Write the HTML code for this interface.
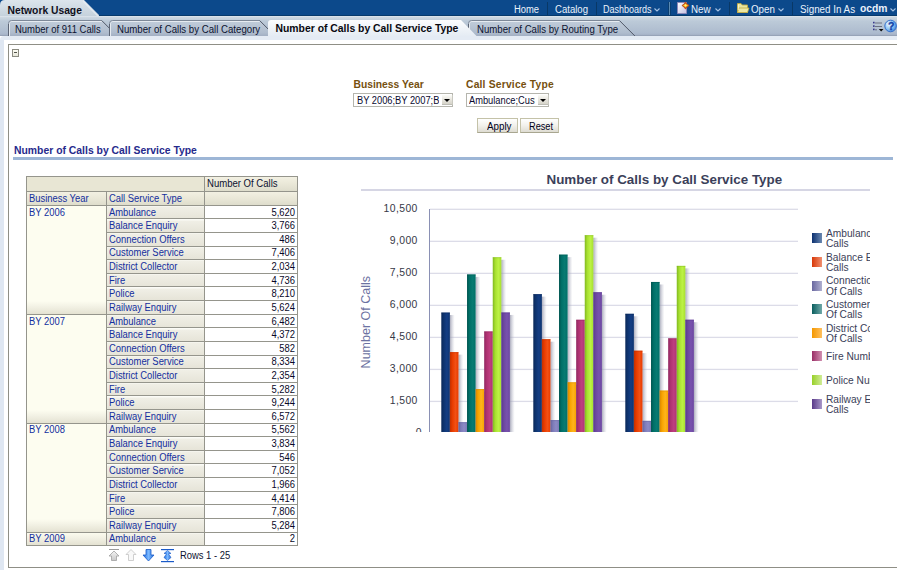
<!DOCTYPE html><html><head><meta charset="utf-8"><style>
*{margin:0;padding:0;box-sizing:border-box}
html,body{width:897px;height:570px;overflow:hidden;background:#fff;font-family:"Liberation Sans", sans-serif;position:relative}
.a{position:absolute;white-space:nowrap;line-height:1}
.s{-webkit-text-stroke:0px currentColor}
</style></head><body><div class="a" style="left:0;top:0;width:897px;height:16px;background:#0c498b"></div><svg class="a" style="left:0;top:0" width="120" height="20"><defs><linearGradient id="nug" x1="0" y1="0" x2="0" y2="1"><stop offset="0" stop-color="#dce5ec"/><stop offset="1" stop-color="#c0cdd8"/></linearGradient></defs><path d="M0,20 L0,5 Q0,0 5,0 L84,0 L100,16 L120,16 L120,20 Z" fill="url(#nug)"/><path d="M83,1 L98,16" stroke="#e8eef3" stroke-width="1.5" opacity="0.8"/></svg><div class="a s" style="left:514.00px;top:4.94px;font-size:10.0px;color:#eaf2fb;transform-origin:0 0;transform:scaleX(0.94);">Home</div><div class="a s" style="left:554.50px;top:4.94px;font-size:10.0px;color:#eaf2fb;transform-origin:0 0;transform:scaleX(0.957);">Catalog</div><div class="a s" style="left:603.00px;top:4.94px;font-size:10.0px;color:#eaf2fb;transform-origin:0 0;transform:scaleX(0.9);">Dashboards</div><div class="a s" style="left:691.00px;top:4.94px;font-size:10.0px;color:#eaf2fb;transform-origin:0 0;transform:scaleX(0.98);">New</div><div class="a s" style="left:750.50px;top:4.94px;font-size:10.0px;color:#eaf2fb;transform-origin:0 0;transform:scaleX(0.98);">Open</div><div class="a s" style="left:799.50px;top:4.94px;font-size:10.0px;color:#eaf2fb;transform-origin:0 0;transform:scaleX(0.98);">Signed In As</div><div class="a" style="left:860.00px;top:4.48px;font-size:10.3px;color:#eaf2fb;font-weight:700;">ocdm</div><div class="a" style="left:547px;top:2px;width:1px;height:13px;background:#093866"></div><div class="a" style="left:596px;top:2px;width:1px;height:13px;background:#093866"></div><div class="a" style="left:729px;top:2px;width:1px;height:13px;background:#093866"></div><div class="a" style="left:792px;top:2px;width:1px;height:13px;background:#093866"></div><div class="a" style="left:668px;top:2px;width:1px;height:13px;background:#0a3e70"></div><div class="a" style="left:669px;top:2px;width:1px;height:13px;background:#5a8ab2"></div><div class="a" style="left:670px;top:2px;width:1px;height:13px;background:#0a3e70"></div><div class="a" style="left:99px;top:15px;width:798px;height:1px;background:#073a6c"></div><svg class="a" style="left:654px;top:8px" width="7" height="4"><path d="M0.5,0.5 L3,3 L5.5,0.5" stroke="#a6c2e4" stroke-width="1.1" fill="none"/></svg><svg class="a" style="left:715px;top:8px" width="7" height="4"><path d="M0.5,0.5 L3,3 L5.5,0.5" stroke="#a6c2e4" stroke-width="1.1" fill="none"/></svg><svg class="a" style="left:777.5px;top:8px" width="7" height="4"><path d="M0.5,0.5 L3,3 L5.5,0.5" stroke="#a6c2e4" stroke-width="1.1" fill="none"/></svg><svg class="a" style="left:889.5px;top:8px" width="7" height="4"><path d="M0.5,0.5 L3,3 L5.5,0.5" stroke="#a6c2e4" stroke-width="1.1" fill="none"/></svg><div class="a" style="left:0;top:16px;width:897px;height:20px;background:linear-gradient(#e0e7ee 0px,#ccd7e1 1.5px,#bccad8 5px,#adbbce 17px,#a4b1c5 19px,#8a96aa 20px)"></div><div class="a" style="left:0;top:36px;width:897px;height:4px;background:#e4ebf4;border-radius:4px 0 0 0"></div><div class="a" style="left:0;top:40px;width:4px;height:530px;background:#dfe7f2"></div><svg class="a" style="left:0;top:0" width="897" height="40"><defs><linearGradient id="itg" x1="0" y1="0" x2="0" y2="1"><stop offset="0" stop-color="#c2cedb"/><stop offset="0.8" stop-color="#afbccd"/><stop offset="1" stop-color="#a2afc2"/></linearGradient><linearGradient id="atg" x1="0" y1="0" x2="0" y2="1"><stop offset="0" stop-color="#fcfdfe"/><stop offset="1" stop-color="#e4ebf3"/></linearGradient></defs><path d="M8,36 L8,23 Q8,20 11,20 L101.7,20 L117.7,36 Z" fill="url(#itg)"/><path d="M9.5,36 L9.5,23.5 Q9.5,21.5 11.5,21.5 L101.7,21.5" stroke="#e6ebf1" stroke-width="1" fill="none"/><path d="M8.5,36 L8.5,23.5 Q8.5,20.5 11.5,20.5 L101.7,20.5" stroke="#7d8898" stroke-width="1" fill="none"/><path d="M8.5,36 L8.5,24" stroke="#5c6575" stroke-width="1" fill="none"/><path d="M101.7,20.5 L117.2,36" stroke="#4f5767" stroke-width="1" fill="none"/><path d="M109,36 L109,23 Q109,20 112,20 L259.6,20 L275.6,36 Z" fill="url(#itg)"/><path d="M110.5,36 L110.5,23.5 Q110.5,21.5 112.5,21.5 L259.6,21.5" stroke="#e6ebf1" stroke-width="1" fill="none"/><path d="M109.5,36 L109.5,23.5 Q109.5,20.5 112.5,20.5 L259.6,20.5" stroke="#7d8898" stroke-width="1" fill="none"/><path d="M109.5,36 L109.5,24" stroke="#5c6575" stroke-width="1" fill="none"/><path d="M259.6,20.5 L275.1,36" stroke="#4f5767" stroke-width="1" fill="none"/><path d="M468,36 L468,23 Q468,20 471,20 L619.4,20 L635.4,36 Z" fill="url(#itg)"/><path d="M469.5,36 L469.5,23.5 Q469.5,21.5 471.5,21.5 L619.4,21.5" stroke="#e6ebf1" stroke-width="1" fill="none"/><path d="M468.5,36 L468.5,23.5 Q468.5,20.5 471.5,20.5 L619.4,20.5" stroke="#7d8898" stroke-width="1" fill="none"/><path d="M468.5,36 L468.5,24" stroke="#5c6575" stroke-width="1" fill="none"/><path d="M619.4,20.5 L634.9,36" stroke="#4f5767" stroke-width="1" fill="none"/><path d="M268,36.5 L268,23 Q268,20 271,20 L461,20 L477,36.5 Z" fill="url(#atg)"/></svg><div class="a" style="left:7.50px;top:6.18px;font-size:10.3px;color:#10101c;font-weight:700;">Network Usage</div><div class="a s" style="left:15.00px;top:24.83px;font-size:10.0px;color:#0c1230;transform-origin:0 0;transform:scaleX(0.947);">Number of 911 Calls</div><div class="a s" style="left:116.50px;top:24.83px;font-size:10.0px;color:#0c1230;transform-origin:0 0;transform:scaleX(0.965);">Number of Calls by Call Category</div><div class="a" style="left:275.50px;top:24.40px;font-size:10.4px;color:#08080f;font-weight:700;">Number of Calls by Call Service Type</div><div class="a s" style="left:477.00px;top:24.83px;font-size:10.0px;color:#0c1230;transform-origin:0 0;transform:scaleX(0.963);">Number of Calls by Routing Type</div><div class="a" style="left:8px;top:44px;width:900px;height:524px;border:1px solid #8f8f86"></div><div class="a" style="left:353.50px;top:80.08px;font-size:10.3px;color:#76500e;font-weight:700;">Business Year</div><div class="a" style="left:466.00px;top:80.08px;font-size:10.3px;color:#76500e;font-weight:700;letter-spacing:0.2px;">Call Service Type</div><div class="a" style="left:14.00px;top:145.80px;font-size:10.4px;color:#262a8c;font-weight:700;">Number of Calls by Call Service Type</div><div class="a s" style="left:180.00px;top:550.53px;font-size:10.0px;color:#0c1230;transform-origin:0 0;transform:scaleX(0.94);">Rows 1 - 25</div><div class="a" style="left:546.50px;top:173.26px;font-size:13.4px;color:#3b3f5a;font-weight:700;">Number of Calls by Call Service Type</div><svg class="a" style="left:676px;top:1px" width="14" height="14"><defs><linearGradient id="pg" x1="0" y1="0" x2="1" y2="1"><stop offset="0" stop-color="#ffffff"/><stop offset="1" stop-color="#c4c0e0"/></linearGradient><radialGradient id="stg" cx="0.5" cy="0.45" r="0.5"><stop offset="0" stop-color="#fff27a"/><stop offset="0.6" stop-color="#ffd020"/><stop offset="1" stop-color="#f0a010"/></radialGradient></defs><path d="M1.5,1.5 L10.5,1.5 L10.5,12.5 L1.5,12.5 Z" fill="url(#pg)" stroke="#8c88b8" stroke-width="1"/><path d="M9.5,1.5 L10.9,3.1 L12.6,4.5 L10.9,5.9 L9.5,7.6 L8.1,5.9 L6.4,4.5 L8.1,3.1 Z" fill="url(#stg)" stroke="#c05020" stroke-width="1.2" stroke-linejoin="round"/></svg><svg class="a" style="left:736px;top:1px" width="14" height="13"><path d="M1.5,2.5 L5,2.5 L6.2,4 L11.5,4 L11.5,11.5 L1.5,11.5 Z" fill="#e8e4a0" stroke="#c0a840" stroke-width="0.9"/><path d="M1.5,11.5 L2.8,7 L13,7 L11.5,11.5 Z" fill="#ece8a4" stroke="#c0a840" stroke-width="0.8"/><path d="M2.3,3.5 L2.3,9" stroke="#fffce0" stroke-width="0.8"/></svg><svg class="a" style="left:872px;top:21px" width="12" height="11"><g fill="#38388a"><rect x="1" y="0.8" width="1.6" height="1.6"/><rect x="1" y="4.3" width="1.6" height="1.6"/><rect x="1" y="7.6" width="1.6" height="1.6"/></g><g fill="#6c7282"><rect x="3" y="1.5" width="7" height="1"/><rect x="3" y="5" width="7" height="1"/><rect x="3" y="8.3" width="2" height="1"/></g><path d="M6.8,8 L11.5,8 L9.15,10.4 Z" fill="#080808"/></svg><svg class="a" style="left:884px;top:19px" width="13" height="14"><defs><radialGradient id="hg" cx="0.35" cy="0.35" r="0.75"><stop offset="0" stop-color="#f0f8ff"/><stop offset="0.55" stop-color="#8cc4f4"/><stop offset="1" stop-color="#3a7ad8"/></radialGradient></defs><circle cx="6.6" cy="7" r="5.8" fill="url(#hg)" stroke="#2a68c8" stroke-width="0.9"/><text x="7.1" y="10.9" font-family="Liberation Sans" font-weight="bold" font-size="10.5" fill="#1444a8" stroke="#1444a8" stroke-width="0.4" text-anchor="middle">?</text></svg><div class="a" style="left:12px;top:49px;width:7px;height:8px;border:1px solid #8a8a80;background:linear-gradient(#fdfdf4,#e6e6da)"></div><div class="a" style="left:14px;top:52px;width:3px;height:1px;background:#505048"></div><div class="a" style="left:353px;top:93px;width:100px;height:14px;border:1px solid #b5b5ad;background:#fff"></div><div class="a" style="left:354px;top:94px;width:85px;height:12px;overflow:hidden"><div class="a" style="left:2.6000000000000227px;top:2.13px;font-size:10px;color:#0a0a30;transform-origin:0 0;transform:scaleX(0.93)">BY 2006;BY 2007;B</div></div><div class="a" style="left:442px;top:95px;width:11px;height:10px;background:linear-gradient(#fbfbf7,#e4e2da 60%,#d6d4ca);border-right:1px solid #c8c8c0;border-bottom:1px solid #bebeb6"></div><svg class="a" style="left:444px;top:99px" width="7" height="4"><path d="M0,0 L6,0 L3,3 Z" fill="#000"/></svg><div class="a" style="left:466px;top:93px;width:83px;height:14px;border:1px solid #b5b5ad;background:#fff"></div><div class="a" style="left:467px;top:94px;width:68px;height:12px;overflow:hidden"><div class="a" style="left:1.8000000000000114px;top:2.13px;font-size:10px;color:#0a0a30;transform-origin:0 0;transform:scaleX(0.93)">Ambulance;Cust</div></div><div class="a" style="left:538px;top:95px;width:11px;height:10px;background:linear-gradient(#fbfbf7,#e4e2da 60%,#d6d4ca);border-right:1px solid #c8c8c0;border-bottom:1px solid #bebeb6"></div><svg class="a" style="left:540px;top:99px" width="7" height="4"><path d="M0,0 L6,0 L3,3 Z" fill="#000"/></svg><div class="a" style="left:477px;top:118px;width:41px;height:15px;border:1px solid #c4c2a8;border-bottom-color:#a8a690;background:linear-gradient(#ffffff,#f2f1ec 50%,#dedcd2)"></div><div class="a s" style="left:486.50px;top:122.13px;font-size:10.0px;color:#00001a;transform-origin:0 0;transform:scaleX(0.98);">Apply</div><div class="a" style="left:520px;top:118px;width:39px;height:15px;border:1px solid #c4c2a8;border-bottom-color:#a8a690;background:linear-gradient(#ffffff,#f2f1ec 50%,#dedcd2)"></div><div class="a s" style="left:529.00px;top:122.13px;font-size:10.0px;color:#00001a;transform-origin:0 0;transform:scaleX(0.92);">Reset</div><div class="a" style="left:13px;top:157px;width:880px;height:3px;background:#9db6d6"></div><div class="a" style="left:26px;top:176px;width:178px;height:15px;background:#e8e6d4;box-shadow:inset 1px 1px 0 #f4f2e0"></div><div class="a" style="left:204px;top:176px;width:93px;height:15px;background:linear-gradient(#f4f2e4,#e8e6d6 60%,#deddcc)"></div><div class="a" style="left:26px;top:191px;width:80px;height:14px;background:linear-gradient(#f4f2e4,#e8e6d6 60%,#deddcc)"></div><div class="a" style="left:106px;top:191px;width:98px;height:14px;background:linear-gradient(#f4f2e4,#e8e6d6 60%,#deddcc)"></div><div class="a" style="left:204px;top:191px;width:93px;height:14px;background:linear-gradient(#f4f2e4,#e8e6d6 60%,#deddcc)"></div><div class="a" style="left:26px;top:205px;width:80px;height:340.50px;background:#fdfdf0"></div><div class="a" style="left:204px;top:205px;width:93px;height:340.50px;background:#fff"></div><div class="a" style="left:26px;top:300.96px;width:80px;height:13.00px;background:linear-gradient(#fdfdf0,#f2f1e4 45%,#e4e2d2)"></div><div class="a" style="left:26px;top:409.92px;width:80px;height:13.00px;background:linear-gradient(#fdfdf0,#f2f1e4 45%,#e4e2d2)"></div><div class="a" style="left:26px;top:518.88px;width:80px;height:13.00px;background:linear-gradient(#fdfdf0,#f2f1e4 45%,#e4e2d2)"></div><div class="a" style="left:26px;top:531.88px;width:80px;height:13.62px;background:linear-gradient(#fdfdf0,#f2f1e4 45%,#e4e2d2)"></div><div class="a" style="left:106px;top:205.00px;width:98px;height:13.62px;background:linear-gradient(#fbfbf6 0,#fbfbf6 1px,#f0efe6 2px,#e6e4d8)"></div><div class="a s" style="left:28.50px;top:207.53px;font-size:10.0px;color:#132f9e;transform-origin:0 0;transform:scaleX(0.94);">BY 2006</div><div class="a s" style="left:108.50px;top:207.53px;font-size:10.0px;color:#132f9e;transform-origin:0 0;transform:scaleX(0.94);">Ambulance</div><div class="a s" style="left:295.00px;top:207.53px;font-size:10.0px;color:#080828;transform-origin:100% 0;transform:translateX(-100%) scaleX(0.94);">5,620</div><div class="a" style="left:106px;top:218.62px;width:98px;height:13.62px;background:linear-gradient(#fbfbf6 0,#fbfbf6 1px,#f0efe6 2px,#e6e4d8)"></div><div class="a s" style="left:108.50px;top:221.16px;font-size:10.0px;color:#132f9e;transform-origin:0 0;transform:scaleX(0.94);">Balance Enquiry</div><div class="a s" style="left:295.00px;top:221.16px;font-size:10.0px;color:#080828;transform-origin:100% 0;transform:translateX(-100%) scaleX(0.94);">3,766</div><div class="a" style="left:106px;top:232.24px;width:98px;height:13.62px;background:linear-gradient(#fbfbf6 0,#fbfbf6 1px,#f0efe6 2px,#e6e4d8)"></div><div class="a s" style="left:108.50px;top:234.78px;font-size:10.0px;color:#132f9e;transform-origin:0 0;transform:scaleX(0.94);">Connection Offers</div><div class="a s" style="left:295.00px;top:234.78px;font-size:10.0px;color:#080828;transform-origin:100% 0;transform:translateX(-100%) scaleX(0.94);">486</div><div class="a" style="left:106px;top:245.86px;width:98px;height:13.62px;background:linear-gradient(#fbfbf6 0,#fbfbf6 1px,#f0efe6 2px,#e6e4d8)"></div><div class="a s" style="left:108.50px;top:248.40px;font-size:10.0px;color:#132f9e;transform-origin:0 0;transform:scaleX(0.94);">Customer Service</div><div class="a s" style="left:295.00px;top:248.40px;font-size:10.0px;color:#080828;transform-origin:100% 0;transform:translateX(-100%) scaleX(0.94);">7,406</div><div class="a" style="left:106px;top:259.48px;width:98px;height:13.62px;background:linear-gradient(#fbfbf6 0,#fbfbf6 1px,#f0efe6 2px,#e6e4d8)"></div><div class="a s" style="left:108.50px;top:262.02px;font-size:10.0px;color:#132f9e;transform-origin:0 0;transform:scaleX(0.94);">District Collector</div><div class="a s" style="left:295.00px;top:262.02px;font-size:10.0px;color:#080828;transform-origin:100% 0;transform:translateX(-100%) scaleX(0.94);">2,034</div><div class="a" style="left:106px;top:273.10px;width:98px;height:13.62px;background:linear-gradient(#fbfbf6 0,#fbfbf6 1px,#f0efe6 2px,#e6e4d8)"></div><div class="a s" style="left:108.50px;top:275.64px;font-size:10.0px;color:#132f9e;transform-origin:0 0;transform:scaleX(0.94);">Fire</div><div class="a s" style="left:295.00px;top:275.64px;font-size:10.0px;color:#080828;transform-origin:100% 0;transform:translateX(-100%) scaleX(0.94);">4,736</div><div class="a" style="left:106px;top:286.72px;width:98px;height:13.62px;background:linear-gradient(#fbfbf6 0,#fbfbf6 1px,#f0efe6 2px,#e6e4d8)"></div><div class="a s" style="left:108.50px;top:289.26px;font-size:10.0px;color:#132f9e;transform-origin:0 0;transform:scaleX(0.94);">Police</div><div class="a s" style="left:295.00px;top:289.26px;font-size:10.0px;color:#080828;transform-origin:100% 0;transform:translateX(-100%) scaleX(0.94);">8,210</div><div class="a" style="left:106px;top:300.34px;width:98px;height:13.62px;background:linear-gradient(#fbfbf6 0,#fbfbf6 1px,#f0efe6 2px,#e6e4d8)"></div><div class="a s" style="left:108.50px;top:302.88px;font-size:10.0px;color:#132f9e;transform-origin:0 0;transform:scaleX(0.94);">Railway Enquiry</div><div class="a s" style="left:295.00px;top:302.88px;font-size:10.0px;color:#080828;transform-origin:100% 0;transform:translateX(-100%) scaleX(0.94);">5,624</div><div class="a" style="left:106px;top:313.96px;width:98px;height:13.62px;background:linear-gradient(#fbfbf6 0,#fbfbf6 1px,#f0efe6 2px,#e6e4d8)"></div><div class="a s" style="left:28.50px;top:316.50px;font-size:10.0px;color:#132f9e;transform-origin:0 0;transform:scaleX(0.94);">BY 2007</div><div class="a s" style="left:108.50px;top:316.50px;font-size:10.0px;color:#132f9e;transform-origin:0 0;transform:scaleX(0.94);">Ambulance</div><div class="a s" style="left:295.00px;top:316.50px;font-size:10.0px;color:#080828;transform-origin:100% 0;transform:translateX(-100%) scaleX(0.94);">6,482</div><div class="a" style="left:106px;top:327.58px;width:98px;height:13.62px;background:linear-gradient(#fbfbf6 0,#fbfbf6 1px,#f0efe6 2px,#e6e4d8)"></div><div class="a s" style="left:108.50px;top:330.12px;font-size:10.0px;color:#132f9e;transform-origin:0 0;transform:scaleX(0.94);">Balance Enquiry</div><div class="a s" style="left:295.00px;top:330.12px;font-size:10.0px;color:#080828;transform-origin:100% 0;transform:translateX(-100%) scaleX(0.94);">4,372</div><div class="a" style="left:106px;top:341.20px;width:98px;height:13.62px;background:linear-gradient(#fbfbf6 0,#fbfbf6 1px,#f0efe6 2px,#e6e4d8)"></div><div class="a s" style="left:108.50px;top:343.74px;font-size:10.0px;color:#132f9e;transform-origin:0 0;transform:scaleX(0.94);">Connection Offers</div><div class="a s" style="left:295.00px;top:343.74px;font-size:10.0px;color:#080828;transform-origin:100% 0;transform:translateX(-100%) scaleX(0.94);">582</div><div class="a" style="left:106px;top:354.82px;width:98px;height:13.62px;background:linear-gradient(#fbfbf6 0,#fbfbf6 1px,#f0efe6 2px,#e6e4d8)"></div><div class="a s" style="left:108.50px;top:357.36px;font-size:10.0px;color:#132f9e;transform-origin:0 0;transform:scaleX(0.94);">Customer Service</div><div class="a s" style="left:295.00px;top:357.36px;font-size:10.0px;color:#080828;transform-origin:100% 0;transform:translateX(-100%) scaleX(0.94);">8,334</div><div class="a" style="left:106px;top:368.44px;width:98px;height:13.62px;background:linear-gradient(#fbfbf6 0,#fbfbf6 1px,#f0efe6 2px,#e6e4d8)"></div><div class="a s" style="left:108.50px;top:370.98px;font-size:10.0px;color:#132f9e;transform-origin:0 0;transform:scaleX(0.94);">District Collector</div><div class="a s" style="left:295.00px;top:370.98px;font-size:10.0px;color:#080828;transform-origin:100% 0;transform:translateX(-100%) scaleX(0.94);">2,354</div><div class="a" style="left:106px;top:382.06px;width:98px;height:13.62px;background:linear-gradient(#fbfbf6 0,#fbfbf6 1px,#f0efe6 2px,#e6e4d8)"></div><div class="a s" style="left:108.50px;top:384.60px;font-size:10.0px;color:#132f9e;transform-origin:0 0;transform:scaleX(0.94);">Fire</div><div class="a s" style="left:295.00px;top:384.60px;font-size:10.0px;color:#080828;transform-origin:100% 0;transform:translateX(-100%) scaleX(0.94);">5,282</div><div class="a" style="left:106px;top:395.68px;width:98px;height:13.62px;background:linear-gradient(#fbfbf6 0,#fbfbf6 1px,#f0efe6 2px,#e6e4d8)"></div><div class="a s" style="left:108.50px;top:398.21px;font-size:10.0px;color:#132f9e;transform-origin:0 0;transform:scaleX(0.94);">Police</div><div class="a s" style="left:295.00px;top:398.21px;font-size:10.0px;color:#080828;transform-origin:100% 0;transform:translateX(-100%) scaleX(0.94);">9,244</div><div class="a" style="left:106px;top:409.30px;width:98px;height:13.62px;background:linear-gradient(#fbfbf6 0,#fbfbf6 1px,#f0efe6 2px,#e6e4d8)"></div><div class="a s" style="left:108.50px;top:411.83px;font-size:10.0px;color:#132f9e;transform-origin:0 0;transform:scaleX(0.94);">Railway Enquiry</div><div class="a s" style="left:295.00px;top:411.83px;font-size:10.0px;color:#080828;transform-origin:100% 0;transform:translateX(-100%) scaleX(0.94);">6,572</div><div class="a" style="left:106px;top:422.92px;width:98px;height:13.62px;background:linear-gradient(#fbfbf6 0,#fbfbf6 1px,#f0efe6 2px,#e6e4d8)"></div><div class="a s" style="left:28.50px;top:425.45px;font-size:10.0px;color:#132f9e;transform-origin:0 0;transform:scaleX(0.94);">BY 2008</div><div class="a s" style="left:108.50px;top:425.45px;font-size:10.0px;color:#132f9e;transform-origin:0 0;transform:scaleX(0.94);">Ambulance</div><div class="a s" style="left:295.00px;top:425.45px;font-size:10.0px;color:#080828;transform-origin:100% 0;transform:translateX(-100%) scaleX(0.94);">5,562</div><div class="a" style="left:106px;top:436.54px;width:98px;height:13.62px;background:linear-gradient(#fbfbf6 0,#fbfbf6 1px,#f0efe6 2px,#e6e4d8)"></div><div class="a s" style="left:108.50px;top:439.07px;font-size:10.0px;color:#132f9e;transform-origin:0 0;transform:scaleX(0.94);">Balance Enquiry</div><div class="a s" style="left:295.00px;top:439.07px;font-size:10.0px;color:#080828;transform-origin:100% 0;transform:translateX(-100%) scaleX(0.94);">3,834</div><div class="a" style="left:106px;top:450.16px;width:98px;height:13.62px;background:linear-gradient(#fbfbf6 0,#fbfbf6 1px,#f0efe6 2px,#e6e4d8)"></div><div class="a s" style="left:108.50px;top:452.69px;font-size:10.0px;color:#132f9e;transform-origin:0 0;transform:scaleX(0.94);">Connection Offers</div><div class="a s" style="left:295.00px;top:452.69px;font-size:10.0px;color:#080828;transform-origin:100% 0;transform:translateX(-100%) scaleX(0.94);">546</div><div class="a" style="left:106px;top:463.78px;width:98px;height:13.62px;background:linear-gradient(#fbfbf6 0,#fbfbf6 1px,#f0efe6 2px,#e6e4d8)"></div><div class="a s" style="left:108.50px;top:466.31px;font-size:10.0px;color:#132f9e;transform-origin:0 0;transform:scaleX(0.94);">Customer Service</div><div class="a s" style="left:295.00px;top:466.31px;font-size:10.0px;color:#080828;transform-origin:100% 0;transform:translateX(-100%) scaleX(0.94);">7,052</div><div class="a" style="left:106px;top:477.40px;width:98px;height:13.62px;background:linear-gradient(#fbfbf6 0,#fbfbf6 1px,#f0efe6 2px,#e6e4d8)"></div><div class="a s" style="left:108.50px;top:479.94px;font-size:10.0px;color:#132f9e;transform-origin:0 0;transform:scaleX(0.94);">District Collector</div><div class="a s" style="left:295.00px;top:479.94px;font-size:10.0px;color:#080828;transform-origin:100% 0;transform:translateX(-100%) scaleX(0.94);">1,966</div><div class="a" style="left:106px;top:491.02px;width:98px;height:13.62px;background:linear-gradient(#fbfbf6 0,#fbfbf6 1px,#f0efe6 2px,#e6e4d8)"></div><div class="a s" style="left:108.50px;top:493.56px;font-size:10.0px;color:#132f9e;transform-origin:0 0;transform:scaleX(0.94);">Fire</div><div class="a s" style="left:295.00px;top:493.56px;font-size:10.0px;color:#080828;transform-origin:100% 0;transform:translateX(-100%) scaleX(0.94);">4,414</div><div class="a" style="left:106px;top:504.64px;width:98px;height:13.62px;background:linear-gradient(#fbfbf6 0,#fbfbf6 1px,#f0efe6 2px,#e6e4d8)"></div><div class="a s" style="left:108.50px;top:507.18px;font-size:10.0px;color:#132f9e;transform-origin:0 0;transform:scaleX(0.94);">Police</div><div class="a s" style="left:295.00px;top:507.18px;font-size:10.0px;color:#080828;transform-origin:100% 0;transform:translateX(-100%) scaleX(0.94);">7,806</div><div class="a" style="left:106px;top:518.26px;width:98px;height:13.62px;background:linear-gradient(#fbfbf6 0,#fbfbf6 1px,#f0efe6 2px,#e6e4d8)"></div><div class="a s" style="left:108.50px;top:520.79px;font-size:10.0px;color:#132f9e;transform-origin:0 0;transform:scaleX(0.94);">Railway Enquiry</div><div class="a s" style="left:295.00px;top:520.79px;font-size:10.0px;color:#080828;transform-origin:100% 0;transform:translateX(-100%) scaleX(0.94);">5,284</div><div class="a" style="left:106px;top:531.88px;width:98px;height:13.62px;background:linear-gradient(#fbfbf6 0,#fbfbf6 1px,#f0efe6 2px,#e6e4d8)"></div><div class="a s" style="left:28.50px;top:534.41px;font-size:10.0px;color:#132f9e;transform-origin:0 0;transform:scaleX(0.94);">BY 2009</div><div class="a s" style="left:108.50px;top:534.41px;font-size:10.0px;color:#132f9e;transform-origin:0 0;transform:scaleX(0.94);">Ambulance</div><div class="a s" style="left:295.00px;top:534.41px;font-size:10.0px;color:#080828;transform-origin:100% 0;transform:translateX(-100%) scaleX(0.94);">2</div><div class="a" style="left:26px;top:176px;width:272px;height:1px;background:#95958c"></div><div class="a" style="left:26px;top:191px;width:272px;height:1px;background:#95958c"></div><div class="a" style="left:26px;top:205px;width:272px;height:1px;background:#95958c"></div><div class="a" style="left:106px;top:218px;width:192px;height:1px;background:#95958c"></div><div class="a" style="left:106px;top:232px;width:192px;height:1px;background:#95958c"></div><div class="a" style="left:106px;top:246px;width:192px;height:1px;background:#95958c"></div><div class="a" style="left:106px;top:259px;width:192px;height:1px;background:#95958c"></div><div class="a" style="left:106px;top:273px;width:192px;height:1px;background:#95958c"></div><div class="a" style="left:106px;top:286px;width:192px;height:1px;background:#95958c"></div><div class="a" style="left:106px;top:300px;width:192px;height:1px;background:#95958c"></div><div class="a" style="left:26px;top:314px;width:272px;height:1px;background:#95958c"></div><div class="a" style="left:106px;top:327px;width:192px;height:1px;background:#95958c"></div><div class="a" style="left:106px;top:341px;width:192px;height:1px;background:#95958c"></div><div class="a" style="left:106px;top:355px;width:192px;height:1px;background:#95958c"></div><div class="a" style="left:106px;top:368px;width:192px;height:1px;background:#95958c"></div><div class="a" style="left:106px;top:382px;width:192px;height:1px;background:#95958c"></div><div class="a" style="left:106px;top:395px;width:192px;height:1px;background:#95958c"></div><div class="a" style="left:106px;top:409px;width:192px;height:1px;background:#95958c"></div><div class="a" style="left:26px;top:423px;width:272px;height:1px;background:#95958c"></div><div class="a" style="left:106px;top:436px;width:192px;height:1px;background:#95958c"></div><div class="a" style="left:106px;top:450px;width:192px;height:1px;background:#95958c"></div><div class="a" style="left:106px;top:463px;width:192px;height:1px;background:#95958c"></div><div class="a" style="left:106px;top:477px;width:192px;height:1px;background:#95958c"></div><div class="a" style="left:106px;top:491px;width:192px;height:1px;background:#95958c"></div><div class="a" style="left:106px;top:504px;width:192px;height:1px;background:#95958c"></div><div class="a" style="left:106px;top:518px;width:192px;height:1px;background:#95958c"></div><div class="a" style="left:26px;top:532px;width:272px;height:1px;background:#95958c"></div><div class="a" style="left:26px;top:545px;width:272px;height:1px;background:#95958c"></div><div class="a" style="left:26px;top:176px;width:1px;height:370px;background:#95958c"></div><div class="a" style="left:297px;top:176px;width:1px;height:370px;background:#95958c"></div><div class="a" style="left:204px;top:176px;width:1px;height:370px;background:#95958c"></div><div class="a" style="left:106px;top:191px;width:1px;height:355px;background:#95958c"></div><div class="a s" style="left:28.50px;top:193.53px;font-size:10.0px;color:#132f9e;transform-origin:0 0;transform:scaleX(0.94);">Business Year</div><div class="a s" style="left:108.50px;top:193.53px;font-size:10.0px;color:#132f9e;transform-origin:0 0;transform:scaleX(0.94);">Call Service Type</div><div class="a s" style="left:206.50px;top:179.03px;font-size:10.0px;color:#0c1230;transform-origin:0 0;transform:scaleX(0.955);">Number Of Calls</div><div class="a" style="left:361px;top:189px;width:509px;height:2px;background:#d6d6e4"></div><svg class="a" style="left:340px;top:195px" width="557" height="240" viewBox="340 195 557 240"><defs><clipPath id="cc"><rect x="340" y="195" width="530" height="237"/></clipPath><linearGradient id="sh" x1="0" y1="0" x2="1" y2="0"><stop offset="0" stop-color="#8c8ea4" stop-opacity="0.75"/><stop offset="1" stop-color="#c0c2d0" stop-opacity="0"/></linearGradient></defs><g clip-path="url(#cc)"><defs><linearGradient id="bg0" x1="0" y1="0" x2="1" y2="0"><stop offset="0" stop-color="#0a2858"/><stop offset="0.3" stop-color="#0e3470"/><stop offset="0.65" stop-color="#143e84"/><stop offset="1" stop-color="#0e3470"/></linearGradient><linearGradient id="bg1" x1="0" y1="0" x2="1" y2="0"><stop offset="0" stop-color="#c03000"/><stop offset="0.3" stop-color="#e83c00"/><stop offset="0.65" stop-color="#f25014"/><stop offset="1" stop-color="#e83c00"/></linearGradient><linearGradient id="bg2" x1="0" y1="0" x2="1" y2="0"><stop offset="0" stop-color="#6462a0"/><stop offset="0.3" stop-color="#7e7cb8"/><stop offset="0.65" stop-color="#8c8ac6"/><stop offset="1" stop-color="#7e7cb8"/></linearGradient><linearGradient id="bg3" x1="0" y1="0" x2="1" y2="0"><stop offset="0" stop-color="#005450"/><stop offset="0.3" stop-color="#007068"/><stop offset="0.65" stop-color="#087a72"/><stop offset="1" stop-color="#007068"/></linearGradient><linearGradient id="bg4" x1="0" y1="0" x2="1" y2="0"><stop offset="0" stop-color="#d88400"/><stop offset="0.3" stop-color="#f8a400"/><stop offset="0.65" stop-color="#ffb41c"/><stop offset="1" stop-color="#f8a400"/></linearGradient><linearGradient id="bg5" x1="0" y1="0" x2="1" y2="0"><stop offset="0" stop-color="#902860"/><stop offset="0.3" stop-color="#b03272"/><stop offset="0.65" stop-color="#be3e80"/><stop offset="1" stop-color="#b03272"/></linearGradient><linearGradient id="bg6" x1="0" y1="0" x2="1" y2="0"><stop offset="0" stop-color="#80b820"/><stop offset="0.3" stop-color="#a8e030"/><stop offset="0.65" stop-color="#bcf244"/><stop offset="1" stop-color="#a8e030"/></linearGradient><linearGradient id="bg7" x1="0" y1="0" x2="1" y2="0"><stop offset="0" stop-color="#583890"/><stop offset="0.3" stop-color="#6c48a0"/><stop offset="0.65" stop-color="#7852ae"/><stop offset="1" stop-color="#6c48a0"/></linearGradient></defs><rect x="430" y="400.78" width="368" height="1.3" fill="#dcdce8"/><rect x="430" y="368.76" width="368" height="1.3" fill="#dcdce8"/><rect x="430" y="336.74" width="368" height="1.3" fill="#dcdce8"/><rect x="430" y="304.72" width="368" height="1.3" fill="#dcdce8"/><rect x="430" y="272.70" width="368" height="1.3" fill="#dcdce8"/><rect x="430" y="240.68" width="368" height="1.3" fill="#dcdce8"/><rect x="430" y="208.66" width="368" height="1.3" fill="#dcdce8"/><text x="421.9" y="436.30" font-family="Liberation Sans" font-size="10.4" letter-spacing="0.4" fill="#363846" text-anchor="end">0</text><text x="417.79999999999995" y="404.28" font-family="Liberation Sans" font-size="10.4" letter-spacing="0.4" fill="#363846" text-anchor="end">1,500</text><text x="417.79999999999995" y="372.26" font-family="Liberation Sans" font-size="10.4" letter-spacing="0.4" fill="#363846" text-anchor="end">3,000</text><text x="417.79999999999995" y="340.24" font-family="Liberation Sans" font-size="10.4" letter-spacing="0.4" fill="#363846" text-anchor="end">4,500</text><text x="417.79999999999995" y="308.22" font-family="Liberation Sans" font-size="10.4" letter-spacing="0.4" fill="#363846" text-anchor="end">6,000</text><text x="417.79999999999995" y="276.20" font-family="Liberation Sans" font-size="10.4" letter-spacing="0.4" fill="#363846" text-anchor="end">7,500</text><text x="417.79999999999995" y="244.18" font-family="Liberation Sans" font-size="10.4" letter-spacing="0.4" fill="#363846" text-anchor="end">9,000</text><text x="417.79999999999995" y="212.16" font-family="Liberation Sans" font-size="10.4" letter-spacing="0.4" fill="#363846" text-anchor="end">10,500</text><rect x="429" y="209" width="1" height="230" fill="#8a90b4"/><rect x="449.80" y="315.03" width="5" height="127.47" fill="url(#sh)"/><rect x="458.38" y="354.61" width="5" height="87.89" fill="url(#sh)"/><rect x="466.95" y="424.63" width="5" height="17.87" fill="url(#sh)"/><rect x="475.53" y="276.91" width="5" height="165.59" fill="url(#sh)"/><rect x="484.10" y="391.58" width="5" height="50.92" fill="url(#sh)"/><rect x="492.68" y="333.90" width="5" height="108.60" fill="url(#sh)"/><rect x="501.25" y="259.74" width="5" height="182.76" fill="url(#sh)"/><rect x="509.82" y="314.95" width="5" height="127.55" fill="url(#sh)"/><rect x="441.30" y="312.53" width="8.6" height="127.47" fill="url(#bg0)"/><rect x="441.30" y="312.53" width="8.6" height="1" fill="#0a2858" opacity="0.45"/><rect x="449.88" y="352.11" width="8.6" height="87.89" fill="url(#bg1)"/><rect x="449.88" y="352.11" width="8.6" height="1" fill="#c03000" opacity="0.45"/><rect x="458.45" y="422.13" width="8.6" height="17.87" fill="url(#bg2)"/><rect x="458.45" y="422.13" width="8.6" height="1" fill="#6462a0" opacity="0.45"/><rect x="467.03" y="274.41" width="8.6" height="165.59" fill="url(#bg3)"/><rect x="467.03" y="274.41" width="8.6" height="1" fill="#005450" opacity="0.45"/><rect x="475.60" y="389.08" width="8.6" height="50.92" fill="url(#bg4)"/><rect x="475.60" y="389.08" width="8.6" height="1" fill="#d88400" opacity="0.45"/><rect x="484.18" y="331.40" width="8.6" height="108.60" fill="url(#bg5)"/><rect x="484.18" y="331.40" width="8.6" height="1" fill="#902860" opacity="0.45"/><rect x="492.75" y="257.24" width="8.6" height="182.76" fill="url(#bg6)"/><rect x="492.75" y="257.24" width="8.6" height="1" fill="#80b820" opacity="0.45"/><rect x="501.32" y="312.45" width="8.6" height="127.55" fill="url(#bg7)"/><rect x="501.32" y="312.45" width="8.6" height="1" fill="#583890" opacity="0.45"/><rect x="541.80" y="296.63" width="5" height="145.87" fill="url(#sh)"/><rect x="550.38" y="341.67" width="5" height="100.83" fill="url(#sh)"/><rect x="558.95" y="422.58" width="5" height="19.92" fill="url(#sh)"/><rect x="567.52" y="257.10" width="5" height="185.40" fill="url(#sh)"/><rect x="576.10" y="384.75" width="5" height="57.75" fill="url(#sh)"/><rect x="584.67" y="322.25" width="5" height="120.25" fill="url(#sh)"/><rect x="593.25" y="237.67" width="5" height="204.83" fill="url(#sh)"/><rect x="601.82" y="294.71" width="5" height="147.79" fill="url(#sh)"/><rect x="533.30" y="294.13" width="8.6" height="145.87" fill="url(#bg0)"/><rect x="533.30" y="294.13" width="8.6" height="1" fill="#0a2858" opacity="0.45"/><rect x="541.88" y="339.17" width="8.6" height="100.83" fill="url(#bg1)"/><rect x="541.88" y="339.17" width="8.6" height="1" fill="#c03000" opacity="0.45"/><rect x="550.45" y="420.08" width="8.6" height="19.92" fill="url(#bg2)"/><rect x="550.45" y="420.08" width="8.6" height="1" fill="#6462a0" opacity="0.45"/><rect x="559.02" y="254.60" width="8.6" height="185.40" fill="url(#bg3)"/><rect x="559.02" y="254.60" width="8.6" height="1" fill="#005450" opacity="0.45"/><rect x="567.60" y="382.25" width="8.6" height="57.75" fill="url(#bg4)"/><rect x="567.60" y="382.25" width="8.6" height="1" fill="#d88400" opacity="0.45"/><rect x="576.17" y="319.75" width="8.6" height="120.25" fill="url(#bg5)"/><rect x="576.17" y="319.75" width="8.6" height="1" fill="#902860" opacity="0.45"/><rect x="584.75" y="235.17" width="8.6" height="204.83" fill="url(#bg6)"/><rect x="584.75" y="235.17" width="8.6" height="1" fill="#80b820" opacity="0.45"/><rect x="593.32" y="292.21" width="8.6" height="147.79" fill="url(#bg7)"/><rect x="593.32" y="292.21" width="8.6" height="1" fill="#583890" opacity="0.45"/><rect x="633.80" y="316.27" width="5" height="126.23" fill="url(#sh)"/><rect x="642.38" y="353.16" width="5" height="89.34" fill="url(#sh)"/><rect x="650.95" y="423.34" width="5" height="19.16" fill="url(#sh)"/><rect x="659.52" y="284.46" width="5" height="158.04" fill="url(#sh)"/><rect x="668.10" y="393.03" width="5" height="49.47" fill="url(#sh)"/><rect x="676.67" y="340.78" width="5" height="101.72" fill="url(#sh)"/><rect x="685.25" y="268.37" width="5" height="174.13" fill="url(#sh)"/><rect x="693.82" y="322.20" width="5" height="120.30" fill="url(#sh)"/><rect x="625.30" y="313.77" width="8.6" height="126.23" fill="url(#bg0)"/><rect x="625.30" y="313.77" width="8.6" height="1" fill="#0a2858" opacity="0.45"/><rect x="633.88" y="350.66" width="8.6" height="89.34" fill="url(#bg1)"/><rect x="633.88" y="350.66" width="8.6" height="1" fill="#c03000" opacity="0.45"/><rect x="642.45" y="420.84" width="8.6" height="19.16" fill="url(#bg2)"/><rect x="642.45" y="420.84" width="8.6" height="1" fill="#6462a0" opacity="0.45"/><rect x="651.02" y="281.96" width="8.6" height="158.04" fill="url(#bg3)"/><rect x="651.02" y="281.96" width="8.6" height="1" fill="#005450" opacity="0.45"/><rect x="659.60" y="390.53" width="8.6" height="49.47" fill="url(#bg4)"/><rect x="659.60" y="390.53" width="8.6" height="1" fill="#d88400" opacity="0.45"/><rect x="668.17" y="338.28" width="8.6" height="101.72" fill="url(#bg5)"/><rect x="668.17" y="338.28" width="8.6" height="1" fill="#902860" opacity="0.45"/><rect x="676.75" y="265.87" width="8.6" height="174.13" fill="url(#bg6)"/><rect x="676.75" y="265.87" width="8.6" height="1" fill="#80b820" opacity="0.45"/><rect x="685.32" y="319.70" width="8.6" height="120.30" fill="url(#bg7)"/><rect x="685.32" y="319.70" width="8.6" height="1" fill="#583890" opacity="0.45"/></g></svg><div class="a" style="left:359.5px;top:275.5px;font-size:12.5px;color:#6c72a2;transform-origin:0 0;transform:rotate(-90deg) translateX(-100%);">Number Of Calls</div><div class="a" style="left:800px;top:220px;width:70px;height:200px;overflow:hidden"><div class="a" style="left:12px;top:13px;width:10px;height:10px;background:linear-gradient(90deg,#0c3070,#6a88b0)"></div><div class="a" style="left:26px;top:8.57px;font-size:10.2px;color:#3a3e58">Ambulance Number Of</div><div class="a" style="left:26px;top:19.17px;font-size:10.2px;color:#3a3e58">Calls</div><div class="a" style="left:12px;top:37px;width:10px;height:10px;background:linear-gradient(90deg,#d83808,#f09070)"></div><div class="a" style="left:26px;top:32.57px;font-size:10.2px;color:#3a3e58">Balance Enquiry</div><div class="a" style="left:26px;top:43.17px;font-size:10.2px;color:#3a3e58">Calls</div><div class="a" style="left:12px;top:60.5px;width:10px;height:10px;background:linear-gradient(90deg,#6a68a0,#b0b0d0)"></div><div class="a" style="left:26px;top:56.07px;font-size:10.2px;color:#3a3e58">Connection Offers</div><div class="a" style="left:26px;top:66.67px;font-size:10.2px;color:#3a3e58">Of Calls</div><div class="a" style="left:12px;top:84px;width:10px;height:10px;background:linear-gradient(90deg,#0a5e5e,#70a8a8)"></div><div class="a" style="left:26px;top:79.57px;font-size:10.2px;color:#3a3e58">Customer Service</div><div class="a" style="left:26px;top:90.17px;font-size:10.2px;color:#3a3e58">Of Calls</div><div class="a" style="left:12px;top:108px;width:10px;height:10px;background:linear-gradient(90deg,#f49800,#ffc060)"></div><div class="a" style="left:26px;top:103.57px;font-size:10.2px;color:#3a3e58">District Collector</div><div class="a" style="left:26px;top:114.17px;font-size:10.2px;color:#3a3e58">Of Calls</div><div class="a" style="left:12px;top:131px;width:10px;height:10px;background:linear-gradient(90deg,#9a2e66,#d090b0)"></div><div class="a" style="left:26px;top:132.37px;font-size:10.2px;color:#3a3e58">Fire Number Of Calls</div><div class="a" style="left:12px;top:155px;width:10px;height:10px;background:linear-gradient(90deg,#98d028,#d0ec98)"></div><div class="a" style="left:26px;top:156.37px;font-size:10.2px;color:#3a3e58">Police Number Of Calls</div><div class="a" style="left:12px;top:179px;width:10px;height:10px;background:linear-gradient(90deg,#5a3a8a,#a898c8)"></div><div class="a" style="left:26px;top:174.57px;font-size:10.2px;color:#3a3e58">Railway Enquiry</div><div class="a" style="left:26px;top:185.17px;font-size:10.2px;color:#3a3e58">Calls</div></div><svg class="a" style="left:107px;top:548px" width="70" height="15"><defs><linearGradient id="ga" x1="0" y1="0" x2="0" y2="1"><stop offset="0" stop-color="#f4f4f4"/><stop offset="1" stop-color="#c8c8c8"/></linearGradient><linearGradient id="bl" x1="0" y1="0" x2="1" y2="0"><stop offset="0" stop-color="#1a6ae0"/><stop offset="0.5" stop-color="#7ab8ff"/><stop offset="1" stop-color="#2a70d8"/></linearGradient></defs><rect x="2" y="1" width="10" height="1" fill="#9a9a9a"/><path d="M7,3 L12,8 L9.5,8 L9.5,12.5 L4.5,12.5 L4.5,8 L2,8 Z" fill="url(#ga)" stroke="#a0a0a0" stroke-width="0.8"/><path d="M24,1.5 L29,6.5 L26.5,6.5 L26.5,12.5 L21.5,12.5 L21.5,6.5 L19,6.5 Z" fill="#f8f8f8" stroke="#c4c4c4" stroke-width="0.8"/><path d="M39,1.5 L44,1.5 L44,7 L47,7 L41.5,13 L36,7 L39,7 Z" fill="url(#bl)" stroke="#1a5ac8" stroke-width="0.8"/><rect x="54" y="1" width="13" height="1.2" fill="#1a5ac8"/><rect x="54" y="13" width="13" height="1.2" fill="#1a5ac8"/><path d="M60.5,2.5 L64,5.5 L62,5.5 L62,6.5 L64,9.5 L60.5,12.5 L57,9.5 L59,6.5 L59,5.5 L57,5.5 Z" fill="url(#bl)" stroke="#1a5ac8" stroke-width="0.6"/></svg></body></html>
